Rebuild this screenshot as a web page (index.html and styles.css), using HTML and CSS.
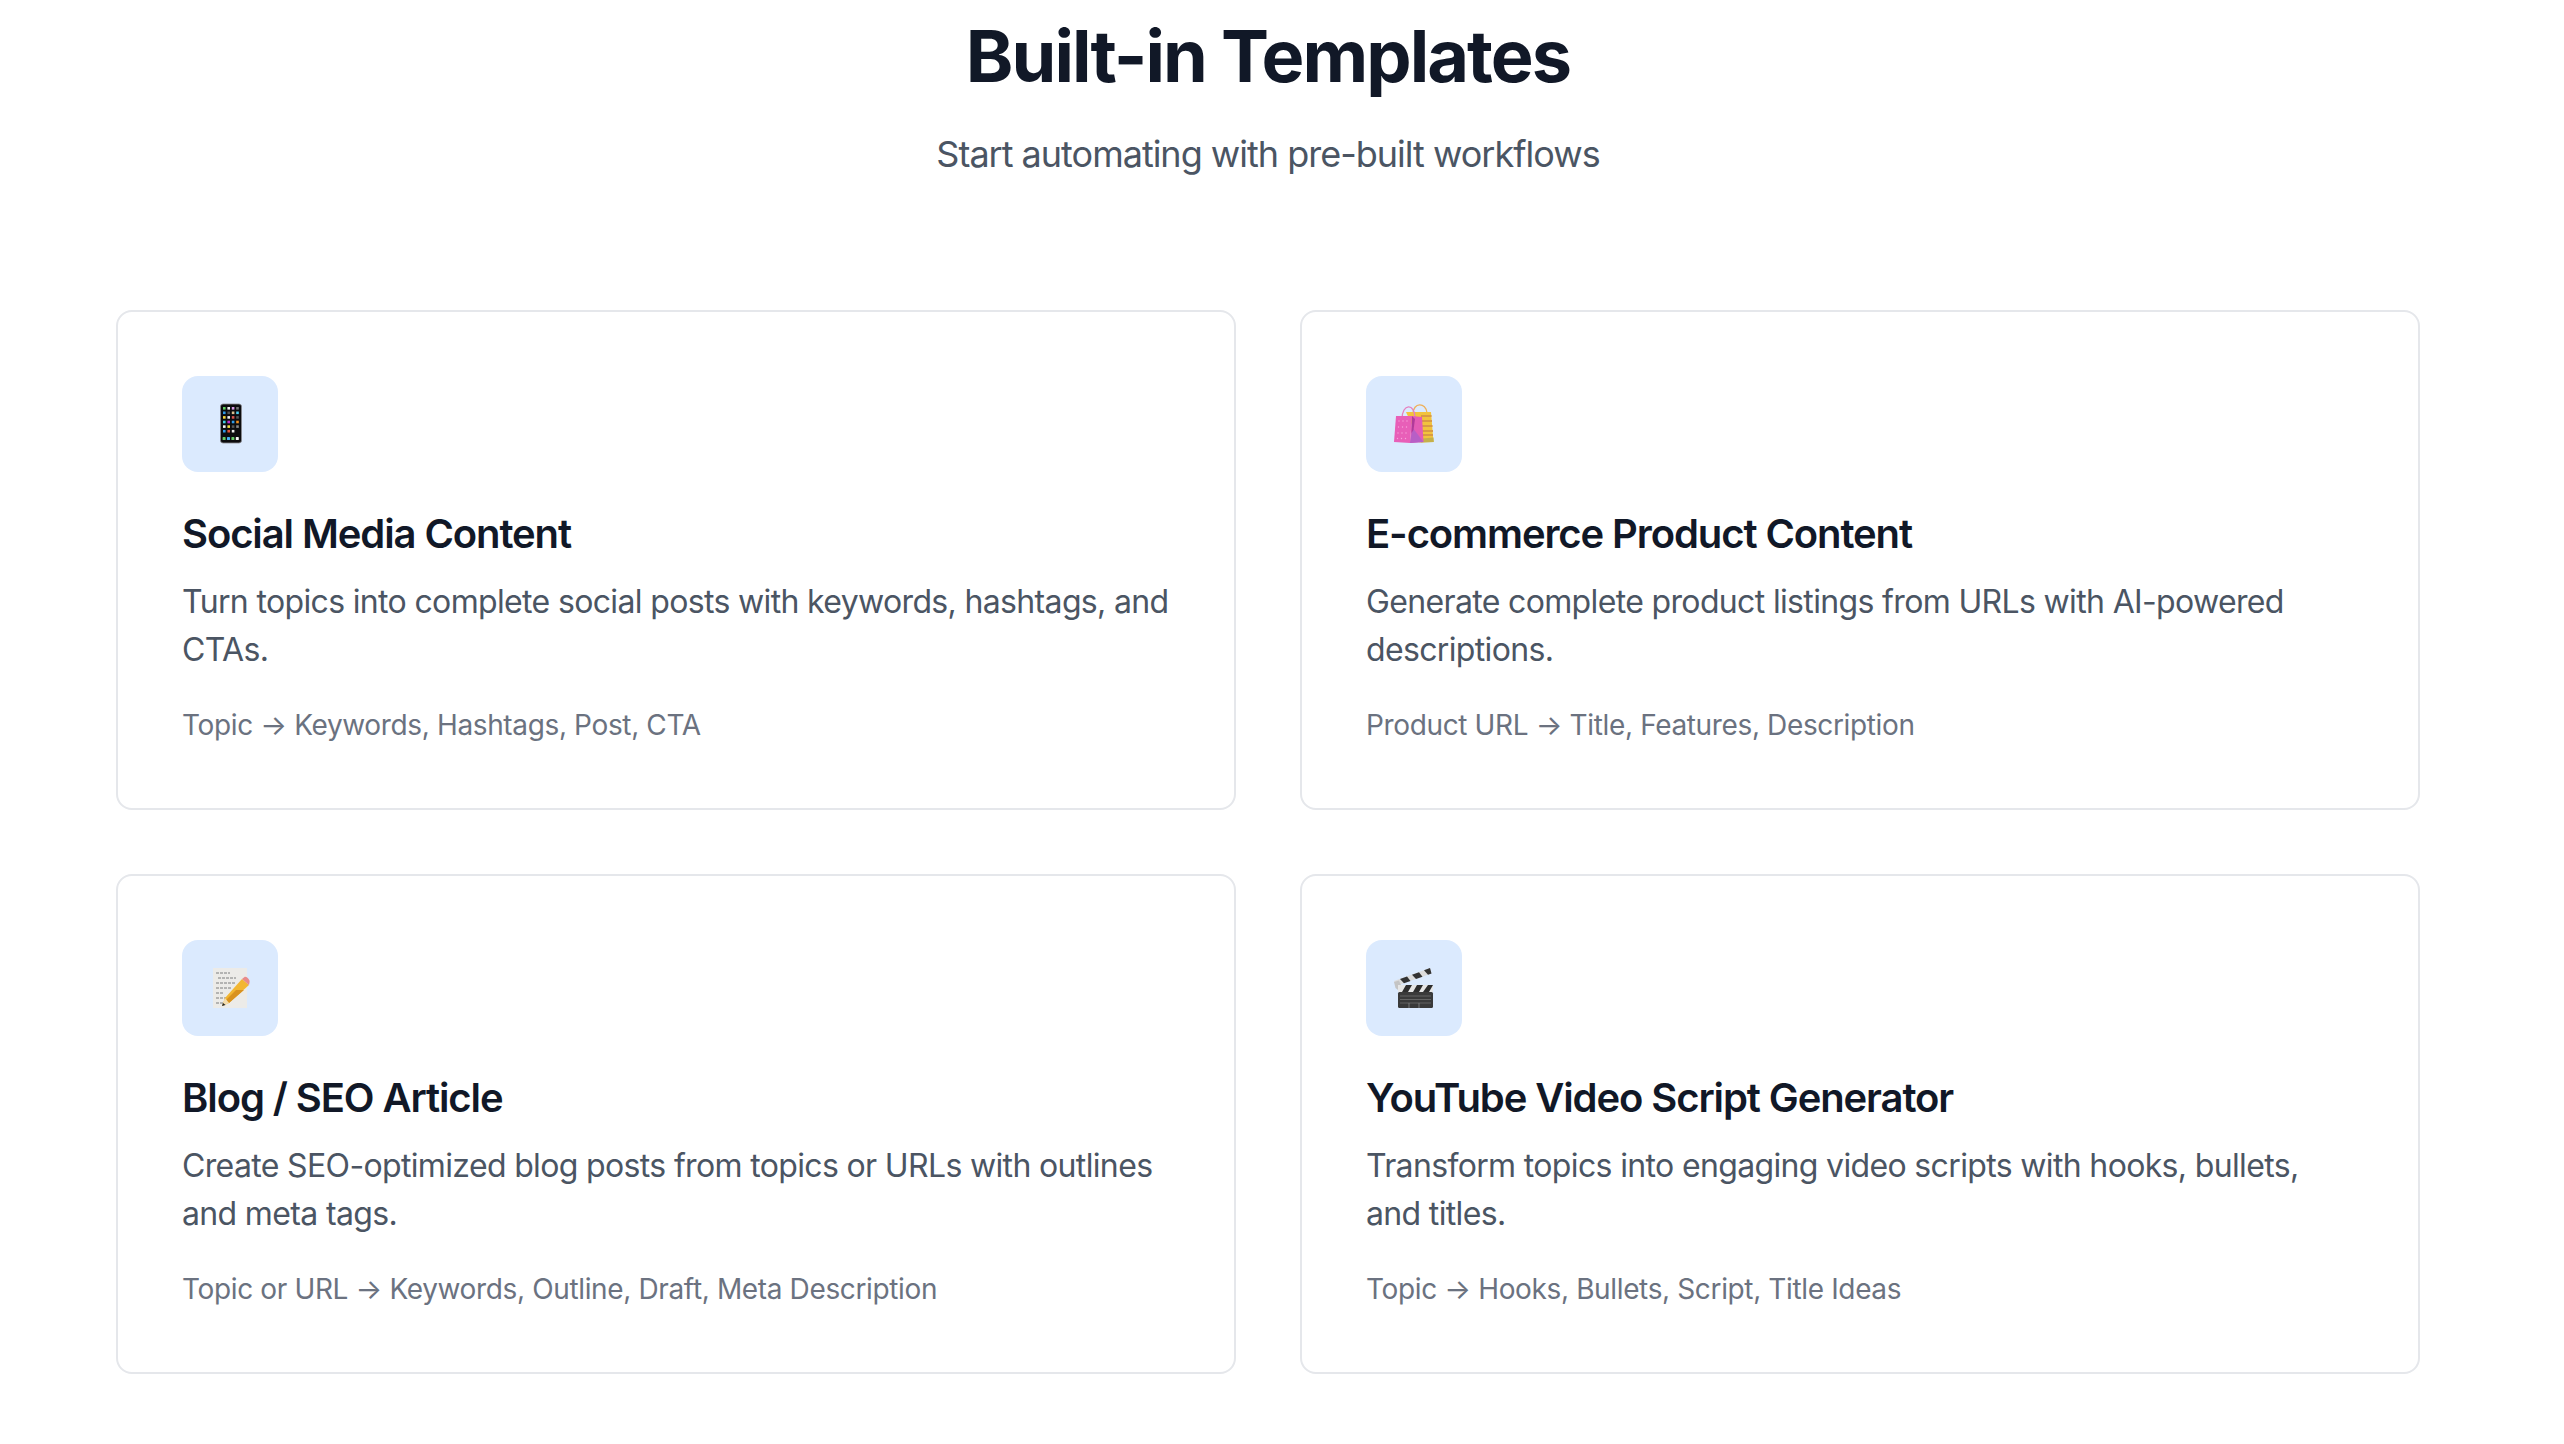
FILE: index.html
```html
<!DOCTYPE html>
<html lang="en">
<head>
<meta charset="utf-8">
<title>Built-in Templates</title>
<link rel="stylesheet" href="styles.css">
</head>
<body>
<main class="page">
  <header class="head">
    <h1 class="title">Built-in Templates</h1>
    <p class="subtitle">Start automating with pre-built workflows</p>
  </header>
  <section class="grid">
    <article class="card">
      <div class="icon">
        <svg class="emoji" viewBox="0 0 48 48" aria-hidden="true">
          <g transform="translate(1 0.500)">
          <rect x="13.5" y="3.5" width="21" height="39" rx="2.5" fill="#0c0c0e" stroke="#8a8a90" stroke-width=".8"/>
          <g>
            <rect x="16" y="6.500" width="2.600" height="2.600" fill="#5fd35f"/><rect x="20.400" y="6.500" width="2.600" height="2.600" fill="#f2f2f2"/><rect x="24.800" y="6.500" width="2.600" height="2.600" fill="#d99ae8"/><rect x="29.200" y="6.500" width="2.600" height="2.600" fill="#777"/>
            <rect x="16" y="11" width="2.600" height="2.600" fill="#2f9be8"/><rect x="20.400" y="11" width="2.600" height="2.600" fill="#555"/><rect x="24.800" y="11" width="2.600" height="2.600" fill="#d8c090"/><rect x="29.200" y="11" width="2.600" height="2.600" fill="#49d0f0"/>
            <rect x="16" y="15.600" width="2.600" height="2.600" fill="#f5d93a"/><rect x="20.400" y="15.600" width="2.600" height="2.600" fill="#eee"/><rect x="24.800" y="15.600" width="2.600" height="2.600" fill="#d9534f"/><rect x="29.200" y="15.600" width="2.600" height="2.600" fill="#555"/>
            <rect x="16" y="20.200" width="2.600" height="2.600" fill="#40d0e0"/><rect x="20.400" y="20.200" width="2.600" height="2.600" fill="#c030d0"/><rect x="24.800" y="20.200" width="2.600" height="2.600" fill="#2f9be8"/><rect x="29.200" y="20.200" width="2.600" height="2.600" fill="#f09020"/>
            <rect x="16" y="24.800" width="2.600" height="2.600" fill="#f5f5f5"/><rect x="20.400" y="24.800" width="2.600" height="2.600" fill="#f5e040"/><rect x="24.800" y="24.800" width="2.600" height="2.600" fill="#555"/><rect x="29.200" y="24.800" width="2.600" height="2.600" fill="#888"/>
            <rect x="16" y="29.400" width="2.600" height="2.600" fill="#2f9be8"/><rect x="20.400" y="29.400" width="2.600" height="2.600" fill="#e0553a"/><rect x="24.800" y="29.400" width="2.600" height="2.600" fill="#eee"/>
            <rect x="15.600" y="36.600" width="3" height="3" rx=".6" fill="#66cc66"/><rect x="20" y="36.600" width="3" height="3" rx=".6" fill="#45b0f0"/><rect x="24.400" y="36.600" width="3" height="3" rx=".6" fill="#66cc66"/><rect x="28.800" y="36.600" width="3" height="3" rx=".6" fill="#f5f5f5"/>
          </g>
          </g>
        </svg>
      </div>
      <h3 class="name">Social Media Content</h3>
      <p class="desc">Turn topics into complete social posts with keywords, hashtags, and CTAs.</p>
      <p class="flow">Topic → Keywords, Hashtags, Post, CTA</p>
    </article>
    <article class="card">
      <div class="icon">
        <svg class="emoji" viewBox="0 0 48 48" aria-hidden="true">
          <path d="M23 14c0-12 13-12 14-1" fill="none" stroke="#eeb05a" stroke-width="1.300"/>
          <path d="M16 12h25l2.500 30-14 .5-1-3z" fill="#f2c33d"/>
          <path d="M31 16h10.500M31 21h11M31 26h11.500M31 31h12M31 35h12" stroke="#d99a45" stroke-width="2.200"/>
          <path d="M32 38.500l11.500-1 .3 4.500-12.800.5z" fill="#c5b04a"/>
          <path d="M12 19c0-16 13-16 13-1" fill="none" stroke="#e67fc0" stroke-width="1.300"/>
          <path d="M6 16h16l-2 27L4 42z" fill="#e85fb8"/>
          <path d="M22 16l10 1 1.500 25L20 43z" fill="#e35cb6"/>
          <path d="M22.500 27.500l11 14.500-13.500 1z" fill="#b75fc6"/>
          <path d="M22 16l3 3-1.500 11-2 3z" fill="#b03a9a"/>
          <g fill="#f5a3da"><circle cx="9" cy="21" r=".7"/><circle cx="13" cy="21" r=".7"/><circle cx="17" cy="21" r=".7"/><circle cx="8.500" cy="27" r=".7"/><circle cx="12.500" cy="27" r=".7"/><circle cx="16.500" cy="27" r=".7"/><circle cx="8" cy="33" r=".7"/><circle cx="12" cy="33" r=".7"/><circle cx="16" cy="33" r=".7"/><circle cx="7.500" cy="38.500" r=".7"/><circle cx="11.500" cy="38.500" r=".7"/><circle cx="15.500" cy="38.500" r=".7"/></g>
        </svg>
      </div>
      <h3 class="name">E-commerce Product Content</h3>
      <p class="desc">Generate complete product listings from URLs with AI-powered descriptions.</p>
      <p class="flow">Product URL → Title, Features, Description</p>
    </article>
    <article class="card">
      <div class="icon">
        <svg class="emoji" viewBox="0 0 48 48" aria-hidden="true">
          <rect x="7" y="4" width="34" height="40" fill="#ecebe8"/>
          <path d="M10 9h14M12 14h18M10 19h20M10 24h15M10 29h7M10 34h10M10 39h7" stroke="#6f6f72" stroke-width=".9" stroke-dasharray="3 1"/>
          <path d="M36 15l7 6-20 18-7 3 3-8z" fill="#f2b632"/>
          <path d="M30 26l8 0-15 13-3-3z" fill="#d9921f"/>
          <path d="M36 15l2.500-2c2-1 6 3 5 5.500L43 21z" fill="#e88a8a"/>
          <path d="M19 34l4 5-7 3z" fill="#f3dcae"/>
          <path d="M17 39l2.500 2-3.500 1z" fill="#222"/>
        </svg>
      </div>
      <h3 class="name">Blog / SEO Article</h3>
      <p class="desc">Create SEO-optimized blog posts from topics or URLs with outlines and meta tags.</p>
      <p class="flow">Topic or URL → Keywords, Outline, Draft, Meta Description</p>
    </article>
    <article class="card">
      <div class="icon">
        <svg class="emoji" viewBox="0 0 48 48" aria-hidden="true">
          <path d="M4 17L40 4l1.500 5.500L6 22z" fill="#dcdcdc"/>
          <path d="M10 15l7-2.500 3.500 4.500-6.500 2.200zM22 10.700l7-2.500 3.500 4.500-6.500 2.200zM34 6.200L40 4l1.500 5.500-3.500 1.200z" fill="#333"/>
          <path d="M4 18l5-1.500 3 7-4 2.500-2.500-2z" fill="#c4c4c4"/>
          <rect x="8" y="21" width="35" height="7" fill="#e6e6e6"/>
          <path d="M16 21h6l-4 7h-6zM27 21h6l-4 7h-6zM38 21h5l-4 7h-6z" fill="#2e2e2e"/>
          <rect x="8" y="28" width="35" height="16" rx="1.500" fill="#3a3a3a"/>
          <path d="M10 32h31M10 35.500h31M10 39h31" stroke="#777" stroke-width=".7"/>
          <path d="M19 39v5M29 39v5" stroke="#888" stroke-width=".8"/>
        </svg>
      </div>
      <h3 class="name">YouTube Video Script Generator</h3>
      <p class="desc">Transform topics into engaging video scripts with hooks, bullets, and titles.</p>
      <p class="flow">Topic → Hooks, Bullets, Script, Title Ideas</p>
    </article>
  </section>
</main>
</body>
</html>
```

FILE: styles.css
```css
* { box-sizing: border-box; }
html, body { margin: 0; padding: 0; background: #fff; }
body { font-family: Inter, "Liberation Sans", sans-serif; color: #111827; }
.page { width: 2304px; margin-left: 116px; padding-top: 16px; }
.head { text-align: center; margin-bottom: 128px; }
.title { margin: 0 0 30px; font-size: 72px; line-height: 80px; font-weight: 700; letter-spacing: -1.95px; color: #111827; }
.subtitle { margin: 0; font-size: 36px; line-height: 56px; letter-spacing: -1px; color: #4b5563; }
.grid { display: grid; grid-template-columns: 1fr 1fr; gap: 64px; }
.card { height: 500px; border: 2px solid #e5e7eb; border-radius: 16px; padding: 64px; background: #fff; }
.icon { width: 96px; height: 96px; border-radius: 16px; background: #dbeafe; display: flex; align-items: center; justify-content: center; margin-bottom: 34px; }
.emoji { width: 48px; height: 48px; display: block; }
.name { margin: 0 0 16px; font-size: 40px; line-height: 56px; font-weight: 600; letter-spacing: -1.1px; color: #111827; }
.desc { margin: 0 0 31px; font-size: 32px; line-height: 48px; letter-spacing: -.65px; color: #4b5563; }
.flow { margin: 0; font-size: 28px; line-height: 40px; letter-spacing: -.36px; color: #6b7280; }
```
